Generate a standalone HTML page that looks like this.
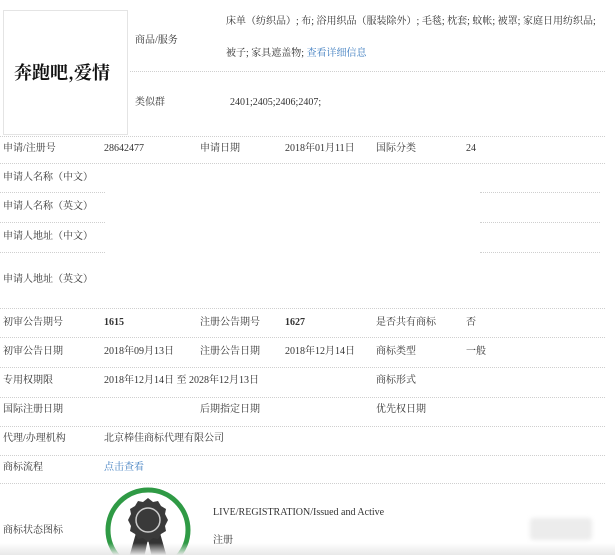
<!DOCTYPE html>
<html><head><meta charset="utf-8"><style>
html,body{margin:0;padding:0;background:#fff;}
body{width:615px;height:555px;position:relative;overflow:hidden;font-family:"Liberation Serif","Noto Serif CJK SC",serif;font-size:10px;color:#333;}
.t{position:absolute;white-space:nowrap;line-height:12px;}
.l{position:absolute;height:0;border-top:1px dotted #cfcfcf;}
.b{font-weight:bold;}
.a{color:#3b7bbf;}
</style></head><body>
<div style="position:absolute;left:3px;top:10px;width:123px;height:123px;border:1px solid #e4e4e4;"></div>
<div class="t" style="left:14px;top:60px;font-size:18px;line-height:24px;font-weight:bold;color:#111;font-family:'Noto Serif CJK SC',serif;">奔跑吧,爱情</div>

<div class="t" style="left:135px;top:35px">商品/服务</div>
<div class="t" style="left:226px;top:16px">床单（纺织品）; 布; 浴用织品（服装除外）; 毛毯; 枕套; 蚊帐; 被罩; 家庭日用纺织品;</div>
<div class="t" style="left:226px;top:48px">被子; 家具遮盖物; <span class="a">查看详细信息</span></div>
<div class="l" style="left:130px;top:71px;width:475px"></div>
<div class="t" style="left:135px;top:97px">类似群</div>
<div class="t" style="left:230px;top:97px">2401;2405;2406;2407;</div>
<div class="l" style="left:0;top:136px;width:605px"></div>

<div class="t" style="left:3px;top:143px">申请/注册号</div>
<div class="t" style="left:104px;top:143px">28642477</div>
<div class="t" style="left:200px;top:143px">申请日期</div>
<div class="t" style="left:285px;top:143px">2018年01月11日</div>
<div class="t" style="left:376px;top:143px">国际分类</div>
<div class="t" style="left:466px;top:143px">24</div>
<div class="l" style="left:0;top:163px;width:605px"></div>

<div class="t" style="left:3px;top:172px">申请人名称（中文）</div>
<div class="l" style="left:0;top:192px;width:105px"></div><div class="l" style="left:480px;top:192px;width:120px"></div>
<div class="t" style="left:3px;top:201px">申请人名称（英文）</div>
<div class="l" style="left:0;top:222px;width:105px"></div><div class="l" style="left:480px;top:222px;width:120px"></div>
<div class="t" style="left:3px;top:231px">申请人地址（中文）</div>
<div class="l" style="left:0;top:252px;width:105px"></div><div class="l" style="left:480px;top:252px;width:120px"></div>
<div class="t" style="left:3px;top:274px">申请人地址（英文）</div>
<div class="l" style="left:0;top:308px;width:605px"></div>

<div class="t" style="left:3px;top:317px">初审公告期号</div>
<div class="t b" style="left:104px;top:317px">1615</div>
<div class="t" style="left:200px;top:317px">注册公告期号</div>
<div class="t b" style="left:285px;top:317px">1627</div>
<div class="t" style="left:376px;top:317px">是否共有商标</div>
<div class="t" style="left:466px;top:317px">否</div>
<div class="l" style="left:0;top:337px;width:605px"></div>

<div class="t" style="left:3px;top:346px">初审公告日期</div>
<div class="t" style="left:104px;top:346px">2018年09月13日</div>
<div class="t" style="left:200px;top:346px">注册公告日期</div>
<div class="t" style="left:285px;top:346px">2018年12月14日</div>
<div class="t" style="left:376px;top:346px">商标类型</div>
<div class="t" style="left:466px;top:346px">一般</div>
<div class="l" style="left:0;top:367px;width:605px"></div>

<div class="t" style="left:3px;top:375px">专用权期限</div>
<div class="t" style="left:104px;top:375px">2018年12月14日 至 2028年12月13日</div>
<div class="t" style="left:376px;top:375px">商标形式</div>
<div class="l" style="left:0;top:397px;width:605px"></div>

<div class="t" style="left:3px;top:404px">国际注册日期</div>
<div class="t" style="left:200px;top:404px">后期指定日期</div>
<div class="t" style="left:376px;top:404px">优先权日期</div>
<div class="l" style="left:0;top:426px;width:605px"></div>

<div class="t" style="left:3px;top:433px">代理/办理机构</div>
<div class="t" style="left:104px;top:433px">北京棒佳商标代理有限公司</div>
<div class="l" style="left:0;top:455px;width:605px"></div>

<div class="t" style="left:3px;top:462px">商标流程</div>
<div class="t a" style="left:104px;top:462px">点击查看</div>
<div class="l" style="left:0;top:483px;width:605px"></div>

<div class="t" style="left:3px;top:525px">商标状态图标</div>
<svg style="position:absolute;left:100px;top:484px" width="100" height="71" viewBox="0 0 100 71">
<circle cx="48" cy="46" r="40" fill="#fff" stroke="#2f9a45" stroke-width="5"/>
<g transform="translate(0,5)">
<path d="M36 44 L28 72 L37 67 L43 74 L48 50 Z M60 44 L68 72 L59 67 L53 74 L48 50 Z" fill="#333"/>
<polygon fill="#3a3a3a" points="48,9 53,13 58,12 61,17 66,20 65,25 68,31 65,37 66,42 61,45 58,50 53,49 48,53 43,49 38,50 35,45 30,42 31,37 28,31 31,25 30,20 35,17 38,12 43,13"/>
<circle cx="48" cy="31" r="12" fill="none" stroke="#ccc" stroke-width="1.5"/>
</g>
</svg>
<div class="t" style="left:213px;top:507px">LIVE/REGISTRATION/Issued and Active</div>
<div class="t" style="left:213px;top:535px">注册</div>
<div style="position:absolute;left:530px;top:518px;width:62px;height:22px;background:#ececec;border-radius:3px;filter:blur(2px)"></div>
<div style="position:absolute;left:0;top:543px;width:615px;height:12px;background:linear-gradient(#fff0,#e8e8e8);"></div>
</body></html>
